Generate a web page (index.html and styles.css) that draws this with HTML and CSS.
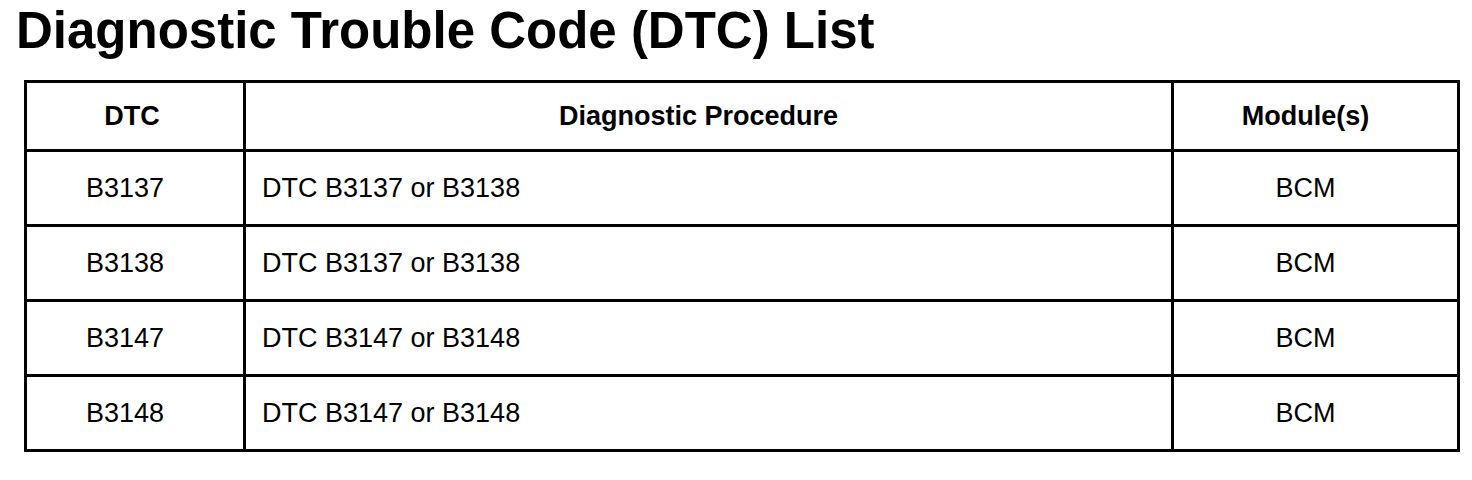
FILE: index.html
```html
<!DOCTYPE html>
<html>
<head>
<meta charset="utf-8">
<link rel="stylesheet" href="styles.css">
</head>
<body>
<div class="page">
  <h1 class="title">Diagnostic Trouble Code (DTC) List</h1>
  <table class="dtc-table">
    <colgroup>
      <col class="col-code">
      <col class="col-proc">
      <col class="col-mod">
    </colgroup>
    <thead>
      <tr class="head-row">
        <th class="head-code">DTC</th>
        <th>Diagnostic Procedure</th>
        <th>Module(s)</th>
      </tr>
    </thead>
    <tbody>
      <tr class="body-row">
        <td class="center">B3137</td>
        <td class="left">DTC B3137 or B3138</td>
        <td class="center">BCM</td>
      </tr>
      <tr class="body-row">
        <td class="center">B3138</td>
        <td class="left">DTC B3137 or B3138</td>
        <td class="center">BCM</td>
      </tr>
      <tr class="body-row">
        <td class="center">B3147</td>
        <td class="left">DTC B3147 or B3148</td>
        <td class="center">BCM</td>
      </tr>
      <tr class="body-row">
        <td class="center">B3148</td>
        <td class="left">DTC B3147 or B3148</td>
        <td class="center">BCM</td>
      </tr>
    </tbody>
  </table>
</div>
</body>
</html>
```

FILE: styles.css
```css
html, body {
  margin: 0;
  padding: 0;
  background: #ffffff;
}

.page {
  padding: 5px 0 0 16px;
  font-family: "Liberation Sans", Arial, sans-serif;
  color: #000000;
}

.title {
  margin: 0;
  font-size: 51px;
  line-height: 51px;
  font-weight: bold;
}

.dtc-table {
  margin: 24px 0 0 8px;
  border-collapse: collapse;
  width: 1436px;
  table-layout: fixed;
}

.col-code { width: 219px; }
.col-proc { width: 928px; }
.col-mod { width: 286px; }

.dtc-table th,
.dtc-table td {
  border: 3px solid #000000;
  padding: 0 20px 0 0;
  font-size: 27px;
  vertical-align: middle;
}

.dtc-table th {
  font-weight: bold;
  text-align: center;
}

.dtc-table th.head-code {
  padding-right: 6px;
}

.head-row { height: 69px; }
.body-row { height: 75px; }

.center { text-align: center; }

.dtc-table td.left {
  text-align: left;
  padding: 0 0 0 16px;
}
```
